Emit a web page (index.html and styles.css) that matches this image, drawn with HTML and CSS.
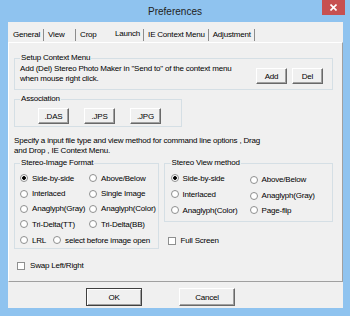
FILE: index.html
```html
<!DOCTYPE html>
<html lang="en">
<head>
<meta charset="utf-8" />
<title>Preferences</title>
<link rel="stylesheet" href="styles.css">
</head>
<body>
<div class="window">
	<div class="titlebar">
		<span></span>
		<span class="title">Preferences</span>
		<span class="close"><svg width="7" height="7" viewBox="0 0 7 7"><path d="M0.5 0.5 L6.5 6.5 M6.5 0.5 L0.5 6.5" stroke="#fff" stroke-width="1.6" /></svg></span>
	</div>

	<div class="client">
		<div class="tabs">
			<span class="tab">General</span>
			<span class="tab">View</span>
			<span class="tab crop">Crop</span>
			<span class="tab selected">Launch</span>
			<span class="tab">IE Context Menu</span>
			<span class="tab">Adjustment</span>
		</div>

		<div class="page">
			<fieldset class="group setup">
				<legend>Setup Context Menu</legend>
				<div class="setup-row">
					<p>Add (Del) Stereo Photo Maker in "Send to" of the context menu<br>when mouse right click.</p>
					<button class="btn">Add</button>
					<button class="btn">Del</button>
				</div>
			</fieldset>

			<fieldset class="group assoc">
				<legend>Association</legend>
				<div class="assoc-row">
					<button class="btn">.DAS</button>
					<button class="btn">.JPS</button>
					<button class="btn">.JPG</button>
				</div>
			</fieldset>

			<p class="hint">Specify a input file type and view method for command line options , Drag<br>and Drop , IE Context Menu.</p>

			<div class="lower">
				<fieldset class="group format">
					<legend>Stereo-Image Format</legend>
					<div class="options format-grid">
						<label><input type="radio" name="fmt" checked>Side-by-side</label>
						<label><input type="radio" name="fmt">Above/Below</label>
						<label><input type="radio" name="fmt">Interlaced</label>
						<label><input type="radio" name="fmt">Single Image</label>
						<label><input type="radio" name="fmt">Anaglyph(Gray)</label>
						<label><input type="radio" name="fmt">Anaglyph(Color)</label>
						<label><input type="radio" name="fmt">Tri-Delta(TT)</label>
						<label><input type="radio" name="fmt">Tri-Delta(BB)</label>
						<div class="last-row">
							<label class="lrl"><input type="radio" name="fmt">LRL</label>
							<label><input type="radio" name="fmt">select before image open</label>
						</div>
					</div>
				</fieldset>

				<div class="right-col">
					<fieldset class="group view">
						<legend>Stereo View method</legend>
						<div class="options view-grid">
							<label><input type="radio" name="view" checked>Side-by-side</label>
							<label class="low"><input type="radio" name="view">Above/Below</label>
							<label><input type="radio" name="view">Interlaced</label>
							<label class="low"><input type="radio" name="view">Anaglyph(Gray)</label>
							<label><input type="radio" name="view">Anaglyph(Color)</label>
							<label><input type="radio" name="view">Page-flip</label>
						</div>
					</fieldset>
					<label class="check full"><input type="checkbox">Full Screen</label>
				</div>
			</div>

			<label class="check swap"><input type="checkbox">Swap Left/Right</label>
		</div>

		<div class="footer">
			<button class="btn big default">OK</button>
			<button class="btn big">Cancel</button>
		</div>
	</div>
</div>
</body>
</html>
```

FILE: styles.css
```css
html, body { margin: 0; padding: 0; }

body {
	font-family: "Liberation Sans", Arial, sans-serif;
	font-size: 8px;
	letter-spacing: -0.2px;
	color: #000;
}

.window {
	width: 350px;
	height: 316px;
	background: #8fc3ef;
	display: flex;
	flex-direction: column;
}

.titlebar {
	height: 22px;
	flex: none;
	display: grid;
	grid-template-columns: 1fr auto 1fr;
	align-items: start;
}

.title {
	font-size: 10px;
	letter-spacing: 0;
	line-height: 12px;
	padding-top: 6px;
	color: #222;
}

.close {
	justify-self: end;
	width: 23px;
	height: 15px;
	margin-right: 5px;
	background: #c75050;
	display: flex;
	align-items: center;
	justify-content: center;
}

.client {
	flex: 1;
	margin: 0 7px 8px 8px;
	background: #f0f0f0;
	display: flex;
	flex-direction: column;
}

/* tab strip */
.tabs {
	height: 20px;
	flex: none;
	box-sizing: border-box;
	padding: 7px 0 0 1px;
	display: flex;
	align-items: flex-start;
}

.tab {
	height: 12px;
	line-height: 12px;
	min-width: 24px;
	padding: 0 3px 0 4px;
	border-right: 1px solid #8c8c8c;
	white-space: nowrap;
}

.tab.crop {
	min-width: 28px;
	border-right-color: transparent;
}

.tab.selected {
	line-height: 9px;
	padding-left: 3px;
}

/* page */
.page {
	height: 240px;
	flex: none;
	box-sizing: border-box;
	border: 1px solid;
	border-color: #fff #a0a0a0 #a0a0a0 #fff;
	padding: 10px 9px 0 5px;
}

p { margin: 0; line-height: 10px; }

.group {
	margin: 0;
	min-width: 0;
	padding: 0 0 0 5px;
	border: 1px solid #d5dfe5;
}

.group legend {
	padding: 0 1px;
	line-height: 10px;
}

.btn {
	font: inherit;
	letter-spacing: inherit;
	color: #000;
	background: #f0f0f0;
	border: 1px solid;
	border-color: #fff #696969 #696969 #fff;
	box-shadow: inset -1px -1px 0 #a0a0a0;
	padding: 0;
	width: 31px;
	height: 16px;
}

.setup { padding-right: 9px; }

.setup-row {
	height: 26px;
	display: flex;
	align-items: flex-start;
	gap: 5px;
}

.setup-row p {
	flex: 1;
	margin-top: 1px;
}

.setup-row .btn { margin-top: 5px; }

.assoc {
	width: 168px;
	box-sizing: border-box;
	margin-top: 4px;
	padding-top: 4px;
	padding-bottom: 2px;
}

.assoc-row {
	display: flex;
	gap: 15px;
	padding-left: 18px;
}

.hint { margin-top: 9px; }

.lower {
	display: flex;
	gap: 5px;
	margin-top: 2px;
}

.format {
	width: 145px;
	box-sizing: border-box;
}

.options label {
	display: flex;
	align-items: center;
	white-space: nowrap;
}

.format-grid {
	display: grid;
	grid-template-columns: 69px auto;
	grid-template-rows: 16px 15px 15px 16px 16px;
	padding-top: 2px;
}

.last-row {
	grid-column: 1 / -1;
	display: flex;
}

.last-row .lrl { margin-right: 7px; }

.right-col {
	width: 170px;
}

.view { padding-left: 6px; }

.view-grid {
	display: grid;
	grid-template-columns: 79px auto;
	grid-auto-rows: 16px;
	padding-top: 2px;
	padding-bottom: 3px;
}

.view-grid .low { padding-top: 3px; }

input[type="radio"] {
	appearance: none;
	width: 8px;
	height: 8px;
	margin: 0 4px 0 0;
	border: 1px solid #8e8f8f;
	border-radius: 50%;
	background: #fff;
	flex: none;
}

input[type="radio"]:checked {
	background: radial-gradient(circle, #000 0, #000 1.5px, #fff 2.2px);
}

.check {
	display: flex;
	align-items: center;
	line-height: 10px;
}

input[type="checkbox"] {
	appearance: none;
	width: 8px;
	height: 8px;
	margin: 0 5px 0 0;
	border: 1px solid #8e8f8f;
	background: #fff;
	flex: none;
}

.full {
	margin: 14px 0 0 4px;
}

.swap {
	margin: 12px 0 0 3px;
}

/* bottom buttons */
.footer {
	display: flex;
	gap: 37px;
	padding: 6px 0 0 78px;
}

.btn.big {
	width: 56px;
	height: 18px;
}

.btn.default {
	border-color: #404040;
	box-shadow: inset 1px 1px 0 #fff, inset -1px -1px 0 #a0a0a0;
}
```
